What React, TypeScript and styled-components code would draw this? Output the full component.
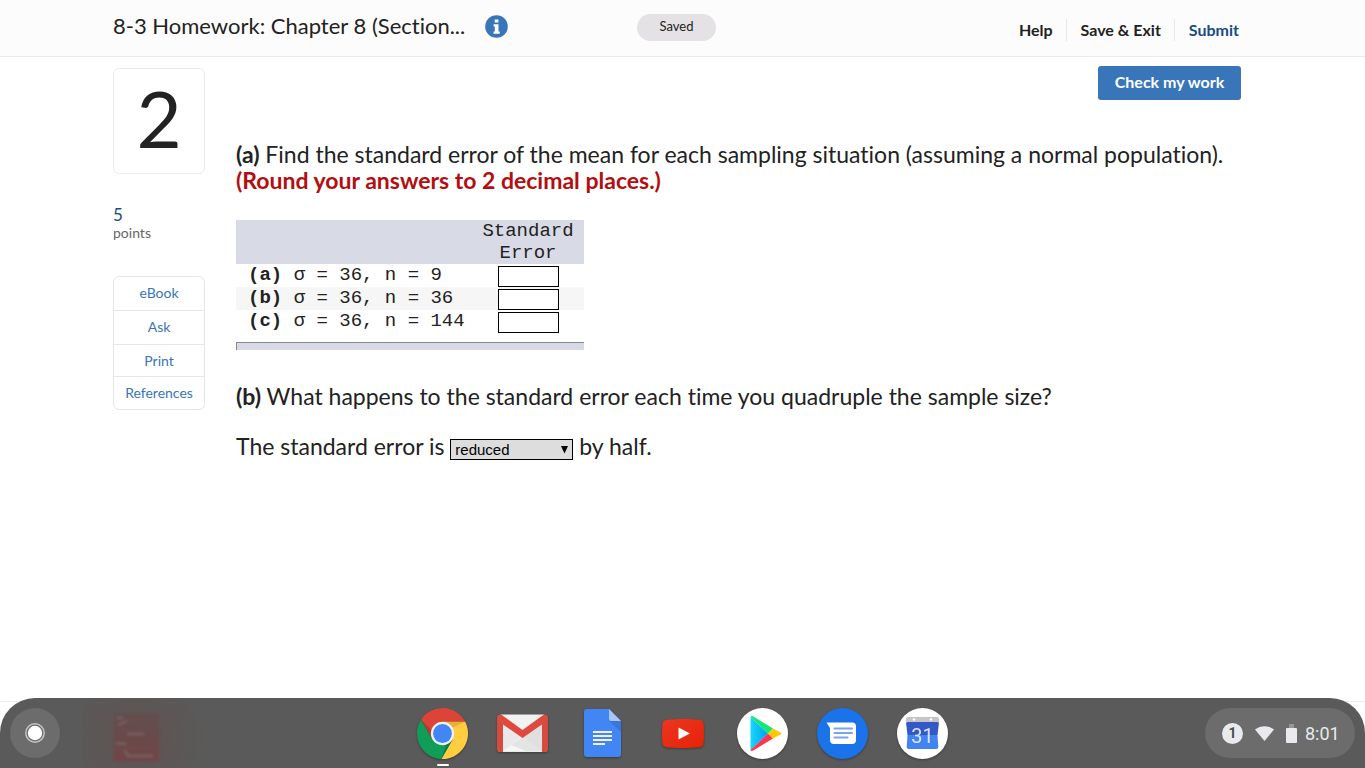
import React from 'react';
import styled, { createGlobalStyle } from 'styled-components';

const GlobalStyle = createGlobalStyle`
  *, *::before, *::after { box-sizing: border-box; }
  body {
    margin: 0;
    background: #fff;
    color: #222;
    font-family: Lato, "Liberation Sans", sans-serif;
    font-variant-ligatures: none;
  }
  button, input, select { font: inherit; }
`;

const Page = styled.div`
  min-height: 100vh;
  display: flex;
  flex-direction: column;
`;

const Header = styled.header`
  display: grid;
  grid-template-columns: 1fr auto 1fr;
  height: 57px;
  padding: 0 125px 0 113px;
  background: #fcfcfc;
  border-bottom: 1px solid #ebebeb;
`;

const TitleGroup = styled.div`
  display: flex;
  align-items: center;
  gap: 20px;
  height: 52px;
`;

const Title = styled.h1`
  margin: 0;
  font-size: 22px;
  font-weight: 400;
  line-height: 28px;
  white-space: nowrap;
`;

const InfoButton = styled.button`
  display: flex;
  padding: 0;
  border: 0;
  background: none;
`;

const SavedPill = styled.span`
  width: 79px;
  height: 27px;
  margin-top: 14px;
  border-radius: 14px;
  background: #e4e2e5;
  font-size: 13px;
  line-height: 25px;
  text-align: center;
`;

const HeaderNav = styled.nav`
  display: flex;
  justify-content: flex-end;
  align-items: flex-start;
  padding-top: 19px;
`;

const NavLink = styled.a<{ $accent?: boolean }>`
  padding: 0 13px 0 14px;
  color: ${(p) => (p.$accent ? '#194b85' : '#222')};
  font-size: 16px;
  font-weight: 700;
  line-height: 22px;
  text-decoration: none;
  & + & { border-left: 1px solid #e8e8e8; }
  &:last-child { padding-right: 1px; }
`;

const Main = styled.main`
  flex: 1;
  display: flex;
  gap: 31px;
  padding: 9px 124px 0 113px;
`;

const Sidebar = styled.aside`
  flex: 0 0 92px;
  padding-top: 2px;
`;

const QuestionNumber = styled.div`
  height: 106px;
  border: 1px solid #ebebeb;
  border-radius: 6px;
  font-size: 78px;
  line-height: 98px;
  text-align: center;
`;

const Points = styled.p`
  margin: 31px 0 36px;
  color: #666;
  font-size: 14px;
  line-height: 15px;
`;

const PointsValue = styled.span`
  display: block;
  color: #194b85;
  font-size: 17px;
  line-height: 20px;
`;

const ToolList = styled.nav`
  display: flex;
  flex-direction: column;
  border: 1px solid #e6e6e6;
  border-radius: 6px;
`;

const ToolLink = styled.a`
  padding-bottom: 2px;
  color: #3875b9;
  font-size: 14px;
  line-height: 31px;
  text-align: center;
  text-decoration: none;
  & + & { border-top: 1px solid #e6e6e6; }
  &:nth-child(3) { padding-bottom: 0; }
  &:last-child { padding-bottom: 1px; }
`;

const Content = styled.section`
  flex: 1;
  min-width: 0;
`;

const Actions = styled.div`
  display: flex;
  justify-content: flex-end;
  margin-bottom: 41px;
`;

const CheckButton = styled.button`
  width: 143px;
  height: 34px;
  padding: 0 0 3px;
  border: 0;
  border-radius: 3px;
  background: #3875b9;
  color: #fff;
  font-size: 16px;
  font-weight: 700;
`;

const Prompt = styled.p`
  margin: 0 0 24px;
  font-size: 23px;
  line-height: 26px;
`;

const Instruction = styled.strong`
  display: block;
  color: #b30e10;
`;

const AnswerTable = styled.table`
  width: 348px;
  margin: 27px 0 33px;
  border-collapse: collapse;
  font-family: "Liberation Mono", monospace;
  font-size: 19px;
  line-height: 22px;

  th, td { padding: 0; font-weight: 400; }
  thead th { background: #d8dbe6; }
  tbody th { padding-left: 12px; text-align: left; vertical-align: top; }
  tbody td { height: 23px; text-align: center; }
  tbody tr:nth-child(even) { background: #f6f6f6; }
`;

const ValueColumn = styled.col`
  width: 112px;
`;

const TableFoot = styled.tfoot`
  td { padding-top: 9px; }
`;

const FootBar = styled.div`
  height: 8px;
  border-top: 1px solid #85878f;
  border-left: 1px solid #85878f;
  background: #d8dbe6;
`;

const AnswerInput = styled.input`
  display: block;
  width: 61px;
  height: 21px;
  margin: 1px auto 0;
  padding: 0 2px;
  border: 1px solid #000;
  background: #fff;
`;

const SelectBox = styled.span`
  display: inline-grid;
  align-items: center;
  width: 123px;
  height: 21px;
  vertical-align: baseline;
  > * { grid-area: 1 / 1; }
  svg { justify-self: end; margin-right: 4px; pointer-events: none; }
`;

const AnswerSelect = styled.select`
  appearance: none;
  width: 100%;
  height: 21px;
  padding: 0 4px;
  border: 1px solid #000;
  border-radius: 0;
  background: #ddd;
  color: #000;
  font-family: "Liberation Sans", Arial, sans-serif;
  font-size: 15px;
  line-height: 19px;
`;

const Footer = styled.footer`
  height: 67px;
  border-top: 1px solid #ebebeb;
`;

const Shelf = styled.div`
  position: fixed;
  inset: auto 0 0;
  display: grid;
  grid-template-columns: 1fr auto 1fr;
  align-items: center;
  height: 70px;
  padding: 0 10px;
  overflow: hidden;
  border-radius: 35px 35px 0 0;
  background: #595a59;
`;

const LauncherArea = styled.div`
  display: flex;
  align-items: center;
  gap: 22px;
`;

const Launcher = styled.button`
  display: grid;
  place-items: center;
  width: 50px;
  height: 50px;
  padding: 0;
  border: 0;
  border-radius: 50%;
  background: #6b6c6b;
`;

const Apps = styled.div`
  display: flex;
  gap: 26px;
`;

const AppButton = styled.button<{ $running?: boolean }>`
  position: relative;
  display: grid;
  place-items: center;
  width: 54px;
  height: 54px;
  padding: 0;
  border: 0;
  background: none;
  svg { overflow: visible; filter: drop-shadow(0 1px 1px rgba(0, 0, 0, 0.35)); }
  &::after {
    content: "";
    display: ${(p) => (p.$running ? 'block' : 'none')};
    position: absolute;
    left: 21px;
    bottom: -6px;
    width: 12px;
    height: 2px;
    border-radius: 1px;
    background: #fff;
  }
`;

const Tray = styled.button`
  display: flex;
  justify-self: end;
  align-items: center;
  gap: 8px;
  width: 150px;
  height: 50px;
  padding: 0 0 0 17px;
  border: 0;
  border-radius: 25px;
  background: #6b6c6b;
  color: #e8eaed;
  font-family: Roboto, sans-serif;
  font-size: 18px;
`;

const TrayIcons = styled.span`
  display: flex;
  align-items: center;
  gap: 12px;
`;

const Badge = styled.span`
  width: 21px;
  height: 21px;
  border-radius: 50%;
  background: #e8eaed;
  color: #4b4c4b;
  font-size: 14px;
  font-weight: 700;
  line-height: 21px;
`;

const InfoIcon = () => (
  <svg width="23" height="23" viewBox="0 0 23 23" aria-hidden="true">
    <circle cx="11.5" cy="11.5" r="11.3" fill="#3875b9" />
    <path d="M9.7 4.6h3.7v3H9.7zM8.6 9.3h4.9v7.2h1.2v2.3H8.5v-2.3h1.3v-4.9H8.6z" fill="#fff" />
  </svg>
);

const LauncherIcon = () => (
  <svg width="22" height="22" viewBox="0 0 22 22" aria-hidden="true">
    <circle cx="11" cy="11" r="9.2" fill="none" stroke="#c4c4c4" strokeWidth="1.5" />
    <circle cx="11" cy="11" r="7.2" fill="#fff" />
  </svg>
);

const LogoBehindShelf = () => (
  <svg width="150" height="70" viewBox="0 0 150 70" aria-hidden="true">
    <defs>
      <filter id="soft"><feGaussianBlur stdDeviation="1.3" /></filter>
      <linearGradient id="brick" x2="0" y2="1">
        <stop stopColor="#624f4f" />
        <stop offset="1" stopColor="#724547" />
      </linearGradient>
      <radialGradient id="glow">
        <stop stopColor="#6c4544" stopOpacity=".4" />
        <stop offset="1" stopColor="#6c4544" stopOpacity="0" />
      </radialGradient>
    </defs>
    <ellipse cx="54" cy="40" rx="70" ry="60" fill="url(#glow)" />
    <g filter="url(#soft)">
      <rect x="32" y="15" width="45" height="48" fill="url(#brick)" />
      <path d="M35 20h6M36 27l9-4M45 36h17M34 45l10 1M43 52l3 6h25" fill="none" stroke="#755c5c" strokeWidth="3" />
    </g>
  </svg>
);

const ChromeIcon = () => (
  <svg width="51" height="51" viewBox="0 0 50 50" aria-hidden="true">
    <path d="M3.94 11.5A25 25 0 0 1 47.2 13.5H25L15.04 30.75Z" fill="#db4437" />
    <path d="M47.2 13.5A25 25 0 0 1 23.86 49.97L34.96 30.75 25 13.5Z" fill="#ffcd40" />
    <path d="M23.86 49.97A25 25 0 0 1 3.94 11.5L15.04 30.75H34.96Z" fill="#0f9d58" />
    <path d="M25 13.5h22.2L35 19z" fill="#c79528" opacity=".5" />
    <path d="M15 30.7L3.9 11.5 14.5 22z" fill="#872f28" opacity=".45" />
    <path d="M35 30.7L23.9 50 29 35z" fill="#075f36" opacity=".5" />
    <circle cx="25" cy="25" r="11.4" fill="#f1f1f1" />
    <circle cx="25" cy="25" r="9.2" fill="#4285f4" />
  </svg>
);

const GmailIcon = () => (
  <svg width="51" height="38" viewBox="0 0 51 38" aria-hidden="true">
    <rect x="1" y="1" width="49" height="37" rx="2.5" fill="#e9e9e9" />
    <path d="M6 37L25.500 22 45 37z" fill="#f6f6f6" />
    <path d="M25.500 23L45 12v25H29L14 31z" fill="#d9d9d9" opacity=".6" />
    <path d="M0 4v31a3 3 0 0 0 3 3h3V10zM51 4v31a3 3 0 0 1-3 3h-3V10z" fill="#d54b3d" />
    <path d="M3.500.5h44L25.500 17z" fill="#f2f2f2" />
    <path d="M0 4C0 .8 3.200-.2 5.500 1.500L25.500 16 45.500 1.500C47.800-.2 51 .8 51 4c0 1.700-.7 2.700-2 3.700L25.500 24 2 7.700C.7 6.700 0 5.700 0 4z" fill="#de4b3e" />
  </svg>
);

const DocsIcon = () => (
  <svg width="37" height="48" viewBox="0 0 37 48" aria-hidden="true">
    <path d="M3 0h22l12 12v33a3 3 0 0 1-3 3H3a3 3 0 0 1-3-3V3a3 3 0 0 1 3-3z" fill="#4285f4" />
    <path d="M25 12h12v11z" fill="#3569c8" opacity=".55" />
    <path d="M25 0l12 12H27a2 2 0 0 1-2-2z" fill="#a8c6fa" />
    <path d="M9 22h19v2H9zM9 26h19v2H9zM9 30h19v2H9zM9 34h12v2H9z" fill="#f1f1f1" />
  </svg>
);

const YoutubeIcon = () => (
  <svg width="42" height="29" viewBox="0 0 42 29" aria-hidden="true">
    <defs>
      <linearGradient id="tube" x2="1" y2="1">
        <stop stopColor="#ee3620" />
        <stop offset="1" stopColor="#e52207" />
      </linearGradient>
    </defs>
    <path d="M5 .7C14-.2 28-.2 37 .7c3 .2 4.300 1.800 4.600 4.500.5 6 .5 12.600 0 18.600-.3 2.700-1.600 4.200-4.600 4.500-9 .9-23 .9-32 0-3-.3-4.300-1.800-4.600-4.500-.5-6-.5-12.600 0-18.600C.7 2.500 2 .9 5 .7z" fill="url(#tube)" />
    <path d="M16.500 8.500v12L28 14.500z" fill="#fff" />
  </svg>
);

const PlayIcon = () => (
  <svg width="51" height="51" viewBox="0 0 51 51" aria-hidden="true">
    <defs>
      <linearGradient id="sky" x1="1" x2="0">
        <stop stopColor="#00a0f0" />
        <stop offset="1" stopColor="#16d8fa" />
      </linearGradient>
    </defs>
    <circle cx="25.500" cy="25.500" r="25.500" fill="#fff" />
    <path d="M13.500 9v33L31 25.500z" fill="url(#sky)" />
    <path d="M13.500 9c.3-1.200 1.500-1.300 2.700-.6L36 20.500l-5 5z" fill="#12e878" />
    <path d="M13.500 42c.3 1.200 1.500 1.300 2.700.6L36 30.500l-5-5z" fill="#f83850" />
    <path d="M36 20.500l7.500 4c1.400.8 1.400 1.300 0 2.100L36 30.500l-5-5z" fill="#fdc80a" />
  </svg>
);

const MessagesIcon = () => (
  <svg width="51" height="51" viewBox="0 0 51 51" aria-hidden="true">
    <circle cx="25.500" cy="25.500" r="25.500" fill="#1a73e8" />
    <path d="M9.500 14.500H35a4 4 0 0 1 4 4V32a4 4 0 0 1-4 4H17a4 4 0 0 1-4-4V20z" fill="#fff" />
    <path d="M17.500 20.500H35M17.500 25H35M17.500 29.500h13" stroke="#78a5f2" strokeWidth="2" strokeLinecap="round" />
  </svg>
);

const CalendarIcon = () => (
  <svg width="51" height="51" viewBox="0 0 51 51" aria-hidden="true">
    <circle cx="25.500" cy="25.500" r="25.500" fill="#fff" />
    <path d="M11 9h29a2 2 0 0 1 2 2v5H9v-5a2 2 0 0 1 2-2z" fill="#c5c5c5" />
    <circle cx="17" cy="11.500" r="1.300" fill="#fff" />
    <circle cx="34" cy="11.500" r="1.300" fill="#fff" />
    <path d="M11 14h29c1.500 0 2 1 1.800 2.300L40.500 27H10.500L9.200 16.300C9 15 9.500 14 11 14z" fill="#3359c7" />
    <path d="M10.500 27h30l.8 12a2 2 0 0 1-2 2H11.700a2 2 0 0 1-2-2z" fill="#4384f3" />
    <text x="25.500" y="35" textAnchor="middle" fontFamily="Roboto, sans-serif" fontSize="20" fill="#dbe6fb">31</text>
  </svg>
);

const WifiIcon = () => (
  <svg width="19" height="15" viewBox="0 0 19 15" aria-hidden="true">
    <path d="M0 3.500C5.500-1 13.500-1 19 3.500L9.500 15z" fill="#e8eaed" />
  </svg>
);

const BatteryIcon = () => (
  <svg width="11" height="19" viewBox="0 0 11 19" aria-hidden="true">
    <path d="M3 0h5v4H3z" fill="#969796" />
    <rect y="4" width="11" height="15" rx="1" fill="#e8eaed" />
  </svg>
);

const ArrowIcon = () => (
  <svg width="9" height="8" viewBox="0 0 9 8" aria-hidden="true">
    <path d="M1 0h7L4.500 7.500z" fill="#000" />
  </svg>
);

const tools = ['eBook', 'Ask', 'Print', 'References'];

const rows = [
  { id: 'a', text: 'σ = 36, n = 9' },
  { id: 'b', text: 'σ = 36, n = 36' },
  { id: 'c', text: 'σ = 36, n = 144' },
];

const apps = [
  { name: 'Chrome', Icon: ChromeIcon, running: true },
  { name: 'Gmail', Icon: GmailIcon },
  { name: 'Docs', Icon: DocsIcon },
  { name: 'YouTube', Icon: YoutubeIcon },
  { name: 'Play Store', Icon: PlayIcon },
  { name: 'Messages', Icon: MessagesIcon },
  { name: 'Calendar', Icon: CalendarIcon },
];

export default function App() {
  return (
    <>
      <GlobalStyle />
      <Page>
        <Header>
          <TitleGroup>
            <Title>8-3 Homework: Chapter 8 (Section...</Title>
            <InfoButton aria-label="Assignment information"><InfoIcon /></InfoButton>
          </TitleGroup>
          <SavedPill>Saved</SavedPill>
          <HeaderNav>
            <NavLink href="#help">Help</NavLink>
            <NavLink href="#exit">Save &amp; Exit</NavLink>
            <NavLink href="#submit" $accent>Submit</NavLink>
          </HeaderNav>
        </Header>
        <Main>
          <Sidebar>
            <QuestionNumber>2</QuestionNumber>
            <Points><PointsValue>5</PointsValue>points</Points>
            <ToolList>
              {tools.map((tool) => (
                <ToolLink key={tool} href={`#${tool.toLowerCase()}`}>{tool}</ToolLink>
              ))}
            </ToolList>
          </Sidebar>
          <Content>
            <Actions><CheckButton>Check my work</CheckButton></Actions>
            <Prompt>
              <b>(a)</b> Find the standard error of the mean for each sampling situation (assuming a normal population).
              <Instruction>(Round your answers to 2 decimal places.)</Instruction>
            </Prompt>
            <AnswerTable>
              <colgroup><col /><ValueColumn /></colgroup>
              <thead>
                <tr><th /><th scope="col">Standard<br />Error</th></tr>
              </thead>
              <tbody>
                {rows.map((row) => (
                  <tr key={row.id}>
                    <th scope="row"><label htmlFor={`answer-${row.id}`}><b>({row.id})</b> {row.text}</label></th>
                    <td><AnswerInput id={`answer-${row.id}`} type="text" /></td>
                  </tr>
                ))}
              </tbody>
              <TableFoot><tr><td colSpan={2}><FootBar /></td></tr></TableFoot>
            </AnswerTable>
            <Prompt><b>(b)</b> What happens to the standard error each time you quadruple the sample size?</Prompt>
            <Prompt>
              <label htmlFor="change">The standard error is</label>{' '}
              <SelectBox>
                <AnswerSelect id="change" defaultValue="reduced">
                  <option>reduced</option>
                  <option>increased</option>
                </AnswerSelect>
                <ArrowIcon />
              </SelectBox>{' '}
              by half.
            </Prompt>
          </Content>
        </Main>
        <Footer />
      </Page>
      <Shelf>
        <LauncherArea>
          <Launcher aria-label="Launcher"><LauncherIcon /></Launcher>
          <LogoBehindShelf />
        </LauncherArea>
        <Apps>
          {apps.map(({ name, Icon, running }) => (
            <AppButton key={name} aria-label={name} $running={running}><Icon /></AppButton>
          ))}
        </Apps>
        <Tray>
          <TrayIcons>
            <Badge>1</Badge>
            <WifiIcon />
            <BatteryIcon />
          </TrayIcons>
          <span>8:01</span>
        </Tray>
      </Shelf>
    </>
  );
}
